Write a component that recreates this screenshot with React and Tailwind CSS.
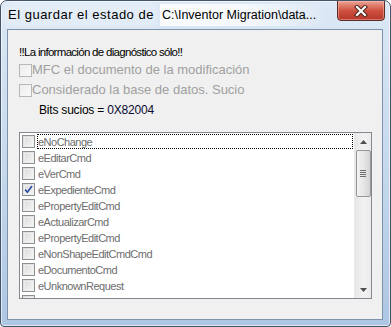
import React from 'react';

const items = [
  { label: 'eNoChange', focused: true },
  { label: 'eEditarCmd' },
  { label: 'eVerCmd' },
  { label: 'eExpedienteCmd', checked: true },
  { label: 'ePropertyEditCmd' },
  { label: 'eActualizarCmd' },
  { label: 'ePropertyEditCmd' },
  { label: 'eNonShapeEditCmdCmd' },
  { label: 'eDocumentoCmd' },
  { label: 'eUnknownRequest' },
  { label: 'eUnknownCmdEditCmd' },
];

function Box({ checked, disabled }) {
  return (
    <span
      className={
        'relative block w-[13px] h-[13px] shrink-0 border ' +
        (disabled
          ? 'border-[#b8b8b8] bg-gradient-to-br from-[#ececec] to-[#fafafa]'
          : 'border-[#8f8f8f] bg-gradient-to-br from-[#d9d9d9] to-[#f6f6f6]')
      }
    >
      <span className="absolute inset-[1px] border border-[#f2f2f2]/70" />
      {checked && (
        <svg width="11" height="11" viewBox="0 0 11 11" className="absolute left-0 top-0">
          <path d="M2.2 5.6 L4.4 8.2 L9 2" fill="none" stroke="#2b4ea3" strokeWidth="1.7" />
        </svg>
      )}
    </span>
  );
}

function CloseButton() {
  return (
    <div className="ml-auto mr-[5px] -mt-[1px] w-[48px] h-[21px] rounded-b-[4px] border border-[#5b2b24] bg-gradient-to-b from-[#eaa496] via-[#cf5140] to-[#b7372a] shadow-[inset_0_0_0_1px_rgba(255,200,190,0.45)] flex items-center justify-center">
      <svg width="14" height="12" viewBox="0 0 14 12">
        <path d="M3 2 L11 10 M11 2 L3 10" stroke="#4a231d" strokeWidth="4.2" strokeLinecap="square" />
        <path d="M3 2 L11 10 M11 2 L3 10" stroke="#ffffff" strokeWidth="2.2" strokeLinecap="square" />
      </svg>
    </div>
  );
}

function ScrollBar() {
  return (
    <div className="w-[17px] h-full flex flex-col items-center bg-gradient-to-r from-[#e6e6e6] via-[#f2f2f2] to-[#ebebeb] border-l border-[#e9e9e9]">
      <div className="h-[17px] w-full flex items-center justify-center">
        <svg width="7" height="4" viewBox="0 0 7 4">
          <path d="M0 4 L3.5 0 L7 4 Z" fill="#505050" />
        </svg>
      </div>
      <div className="w-[15px] h-[47px] rounded-[2px] border border-[#979797] bg-gradient-to-r from-[#f3f3f3] via-[#e6e6e6] to-[#d4d4d4] flex flex-col items-center justify-center gap-[1px]">
        <span className="block w-[6px] h-[1px] bg-[#6e6e6e]" />
        <span className="block w-[6px] h-[1px] bg-[#6e6e6e]" />
        <span className="block w-[6px] h-[1px] bg-[#6e6e6e]" />
        <span className="block w-[6px] h-[1px] bg-[#6e6e6e]" />
      </div>
      <div className="flex-1" />
      <div className="h-[17px] w-full flex items-center justify-center">
        <svg width="7" height="4" viewBox="0 0 7 4">
          <path d="M0 0 L7 0 L3.5 4 Z" fill="#505050" />
        </svg>
      </div>
    </div>
  );
}

export default function App() {
  return (
    <div className="w-[391px] h-[327px] flex flex-col rounded-t-[7px] rounded-b-[4px] border border-[#43546a] bg-gradient-to-b from-[#dce8f5] via-[#c6d9ed] to-[#adc6e2] shadow-[inset_0_0_0_1px_rgba(255,255,255,0.6)] font-['Liberation_Sans',Arial,sans-serif] overflow-hidden">
      {/* title bar */}
      <div className="h-[28px] flex items-start shrink-0">
        <div className="pl-[7px] pt-[6px] flex items-start">
          <span className="text-[13px] leading-[16px] tracking-[0.5px] text-black rounded-[6px] bg-white/25 shadow-[0_0_8px_4px_rgba(255,255,255,0.35)]">
            El guardar el estado de
          </span>
          <span className="ml-[6px] -mt-[3px] pl-[2px] pr-[12px] py-[3px] text-[12.5px] leading-[16px] text-black bg-gradient-to-r from-white/85 via-white/75 to-white/0">
            C:\Inventor Migration\data...
          </span>
        </div>
        <CloseButton />
      </div>

      {/* client area */}
      <div className="ml-[6px] mr-[7px] mb-[6px] flex-1 border border-[#7d93ab] bg-[#f0f0f0] pl-[11px] overflow-hidden">
        <div className="pt-[15px] text-[11.5px] leading-[14px] tracking-[-0.7px] text-black">
          !!La información de diagnóstico sólo!!
        </div>
        <div className="mt-[3px] flex items-center h-[16px] text-[13px] leading-[16px] text-[#a0a0a0]">
          <Box disabled />
          <span>MFC el documento de la modificación</span>
        </div>
        <div className="mt-[4px] flex items-center h-[16px] text-[13px] leading-[16px] text-[#a0a0a0]">
          <Box disabled />
          <span>Considerado la base de datos. Sucio</span>
        </div>
        <div className="mt-[5px] pl-[20px] text-[12px] leading-[15px] tracking-[-0.2px] text-black">
          Bits sucios = <span className="text-[#0a0a30]">0X82004</span>
        </div>

        {/* checked list box */}
        <div className="mt-[14px] w-[353px] h-[167px] border border-[#828790] bg-white flex">
          <div className="flex-1 overflow-hidden">
            {items.map((it, i) => (
              <div key={i} className="h-[16px] flex items-center pl-[2px] pr-[1px]">
                <Box checked={it.checked} />
                <span
                  className={
                    'ml-[2px] flex-1 h-[15px] text-[11px] leading-[14px] tracking-[-0.5px] text-[#6d6d6d] border border-dotted ' +
                    (it.focused ? 'border-black' : 'border-transparent')
                  }
                >
                  {it.label}
                </span>
              </div>
            ))}
          </div>
          <ScrollBar />
        </div>
      </div>
    </div>
  );
}
